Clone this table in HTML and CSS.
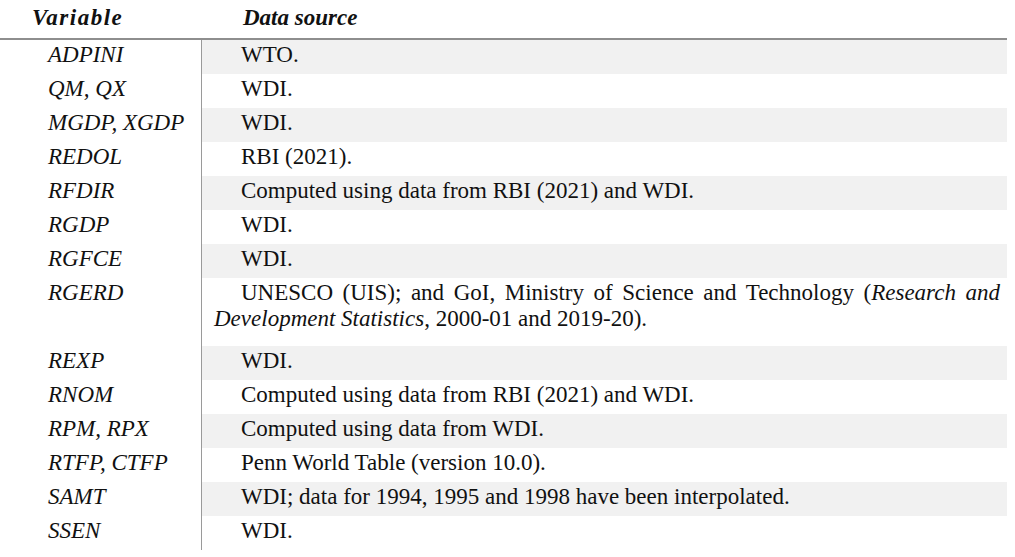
FILE: index.html
```html
<!DOCTYPE html>
<html lang="en">
<head>
<meta charset="utf-8">
<title>Variables and data sources</title>
<link rel="stylesheet" href="styles.css">
</head>
<body>
<div class="table">
  <div class="head">
    <div class="c1">Variable</div>
    <div class="c2">Data source</div>
  </div>
  <div class="rows">
    <div class="row shade"><div class="c1">ADPINI</div><div class="c2">WTO.</div></div>
    <div class="row"><div class="c1">QM, QX</div><div class="c2">WDI.</div></div>
    <div class="row shade"><div class="c1">MGDP, XGDP</div><div class="c2">WDI.</div></div>
    <div class="row"><div class="c1">REDOL</div><div class="c2">RBI (2021).</div></div>
    <div class="row shade"><div class="c1">RFDIR</div><div class="c2">Computed using data from RBI (2021) and WDI.</div></div>
    <div class="row"><div class="c1">RGDP</div><div class="c2">WDI.</div></div>
    <div class="row shade"><div class="c1">RGFCE</div><div class="c2">WDI.</div></div>
    <div class="row tall"><div class="c1">RGERD</div><div class="c2"><span class="line just">UNESCO (UIS); and GoI, Ministry of Science and Technology (<i>Research and</i></span><span class="line"><i>Development Statistics</i>, 2000-01 and 2019-20).</span></div></div>
    <div class="row shade"><div class="c1">REXP</div><div class="c2">WDI.</div></div>
    <div class="row"><div class="c1">RNOM</div><div class="c2">Computed using data from RBI (2021) and WDI.</div></div>
    <div class="row shade"><div class="c1">RPM, RPX</div><div class="c2">Computed using data from WDI.</div></div>
    <div class="row"><div class="c1">RTFP, CTFP</div><div class="c2">Penn World Table (version 10.0).</div></div>
    <div class="row shade"><div class="c1">SAMT</div><div class="c2">WDI; data for 1994, 1995 and 1998 have been interpolated.</div></div>
    <div class="row"><div class="c1">SSEN</div><div class="c2">WDI.</div></div>
  </div>
</div>
</body>
</html>
```
FILE: styles.css
```css
html, body {
  margin: 0;
  padding: 0;
  background: #ffffff;
}

body {
  font-family: "Liberation Serif", "Times New Roman", serif;
  font-size: 23px;
  line-height: 22px;
  color: #111111;
}

.table {
  width: 1007px;
}

.head {
  display: flex;
  height: 38px;
  border-bottom: 2px solid #8e8e8e;
  font-weight: bold;
  font-style: italic;
}

.head .c1 {
  width: 202px;
  box-sizing: border-box;
  padding: 7px 0 0 32px;
  letter-spacing: 1.5px;
}

.head .c2 {
  flex: 1;
  padding: 7px 0 0 41px;
}

.rows {
  display: flex;
  flex-direction: column;
}

.row {
  display: flex;
  height: 34px;
}

.row.tall {
  height: 68px;
}

.row .c1 {
  width: 202px;
  box-sizing: border-box;
  padding: 4px 0 0 48px;
  font-style: italic;
  border-right: 1px solid #9a9a9a;
}

.row .c2 {
  flex: 1;
  box-sizing: border-box;
  padding: 4px 7px 0 12px;
  text-indent: 27px;
  text-align: justify;
}

.row.tall .c2 {
  padding-top: 2px;
  line-height: 26px;
}

.row.shade .c2 {
  background: #f1f1f1;
}

.line {
  display: block;
}

.line.just {
  text-align: justify;
  text-align-last: justify;
}

.line + .line {
  text-indent: 0;
}
```
